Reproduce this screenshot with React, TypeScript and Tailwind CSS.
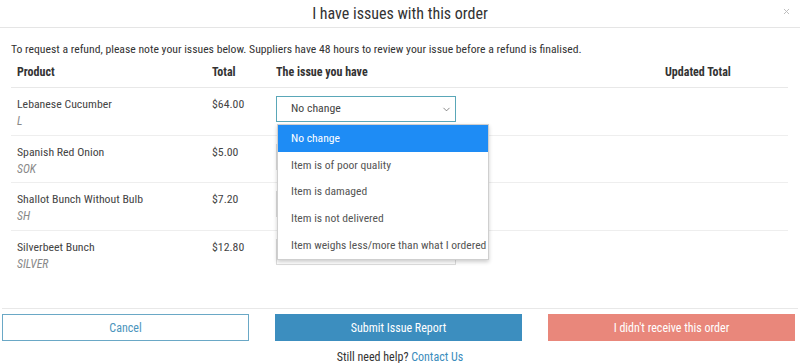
import { ChevronDown, X } from 'lucide-react';

const rows = [
  { name: 'Lebanese Cucumber', code: 'L', total: '$64.00' },
  { name: 'Spanish Red Onion', code: 'SOK', total: '$5.00' },
  { name: 'Shallot Bunch Without Bulb', code: 'SH', total: '$7.20' },
  { name: 'Silverbeet Bunch', code: 'SILVER', total: '$12.80' },
];

const options = [
  'No change',
  'Item is of poor quality',
  'Item is damaged',
  'Item is not delivered',
  'Item weighs less/more than what I ordered',
];

export default function App() {
  return (
    <div className="w-[800px] h-[363px] overflow-hidden bg-white text-[#444] font-['Roboto_Condensed','Liberation_Sans_Narrow','Roboto',sans-serif]">
      <div className="relative h-[28px] border-b border-[#e5e5e5] flex items-center justify-center">
        <h1 className="text-[16px] text-[#333] pt-[1px]">I have issues with this order</h1>
        <X className="absolute right-[9px] top-[7px] w-[9px] h-[9px] text-[#bbb]" strokeWidth={2.5} />
      </div>

      <div className="px-[11px] h-[280px]">
        <p className="text-[11.7px] text-[#333] pt-[13px] leading-[16px]">
          To request a refund, please note your issues below. Suppliers have 48 hours to review your issue before a refund is finalised.
        </p>

        <div className="mr-[1px] relative">
          <div className="grid grid-cols-[195px_64px_389px_1fr] h-[31px] items-end pb-[7px] text-[12px] leading-[16px] font-bold text-[#333] border-b border-[#e8e8e8]">
            <span className="px-[6px]">Product</span>
            <span className="px-[6px]">Total</span>
            <span className="px-[6px]">The issue you have</span>
            <span className="px-[6px]">Updated Total</span>
          </div>

          {rows.map((r, i) => (
            <div
              key={r.name}
              className={`grid grid-cols-[195px_64px_389px_1fr] h-[47.5px] pt-[8px] text-[11.8px] ${
                i < rows.length - 1 ? 'border-b border-[#eeeeee]' : ''
              }`}
            >
              <div className="px-[6px]">
                <div className="leading-[16px]">{r.name}</div>
                <div className="leading-[18px] italic text-[#888]">{r.code}</div>
              </div>
              <div className="px-[6px] leading-[16px]">{r.total}</div>
              <div className="pl-[6px]">
                <div
                  className={`w-[180px] h-[26px] flex items-center justify-between pl-[14px] pr-[3px] border ${
                    i === 0 ? 'border-[#5aa7b8]' : 'border-[#ddd]'
                  }`}
                >
                  <span>No change</span>
                  <ChevronDown className="w-[11px] h-[11px] text-[#555]" strokeWidth={1.5} />
                </div>
              </div>
              <div />
            </div>
          ))}

          <div className="absolute left-[266px] top-[67px] w-[212px] bg-white border border-[#cfcfcf] shadow-[0_2px_4px_rgba(0,0,0,0.2)] text-[11.6px]">
            {options.map((o, i) => (
              <div
                key={o}
                className={`h-[26.8px] flex items-center pl-[13px] whitespace-nowrap ${
                  i === 0 ? 'bg-[#1e8cf5] text-white' : 'text-[#555]'
                }`}
              >
                {o}
              </div>
            ))}
          </div>
        </div>
      </div>

      <div className="border-t border-[#e8e8e8] mx-[2px]">
        <div className="grid grid-cols-3 gap-[26px] pt-[5px] mr-[3px] text-[12px]">
          <button className="h-[27px] border border-[#6aa8c6] text-[#4c95bd] bg-white">Cancel</button>
          <button className="h-[27px] bg-[#3c8ebf] text-white">Submit Issue Report</button>
          <button className="h-[27px] bg-[#e9877b] text-white">I didn't receive this order</button>
        </div>
        <p className="text-center text-[12px] leading-[14px] text-[#333] mt-[9px]">
          Still need help? <span className="text-[#3b8dbd]">Contact Us</span>
        </p>
      </div>
    </div>
  );
}
